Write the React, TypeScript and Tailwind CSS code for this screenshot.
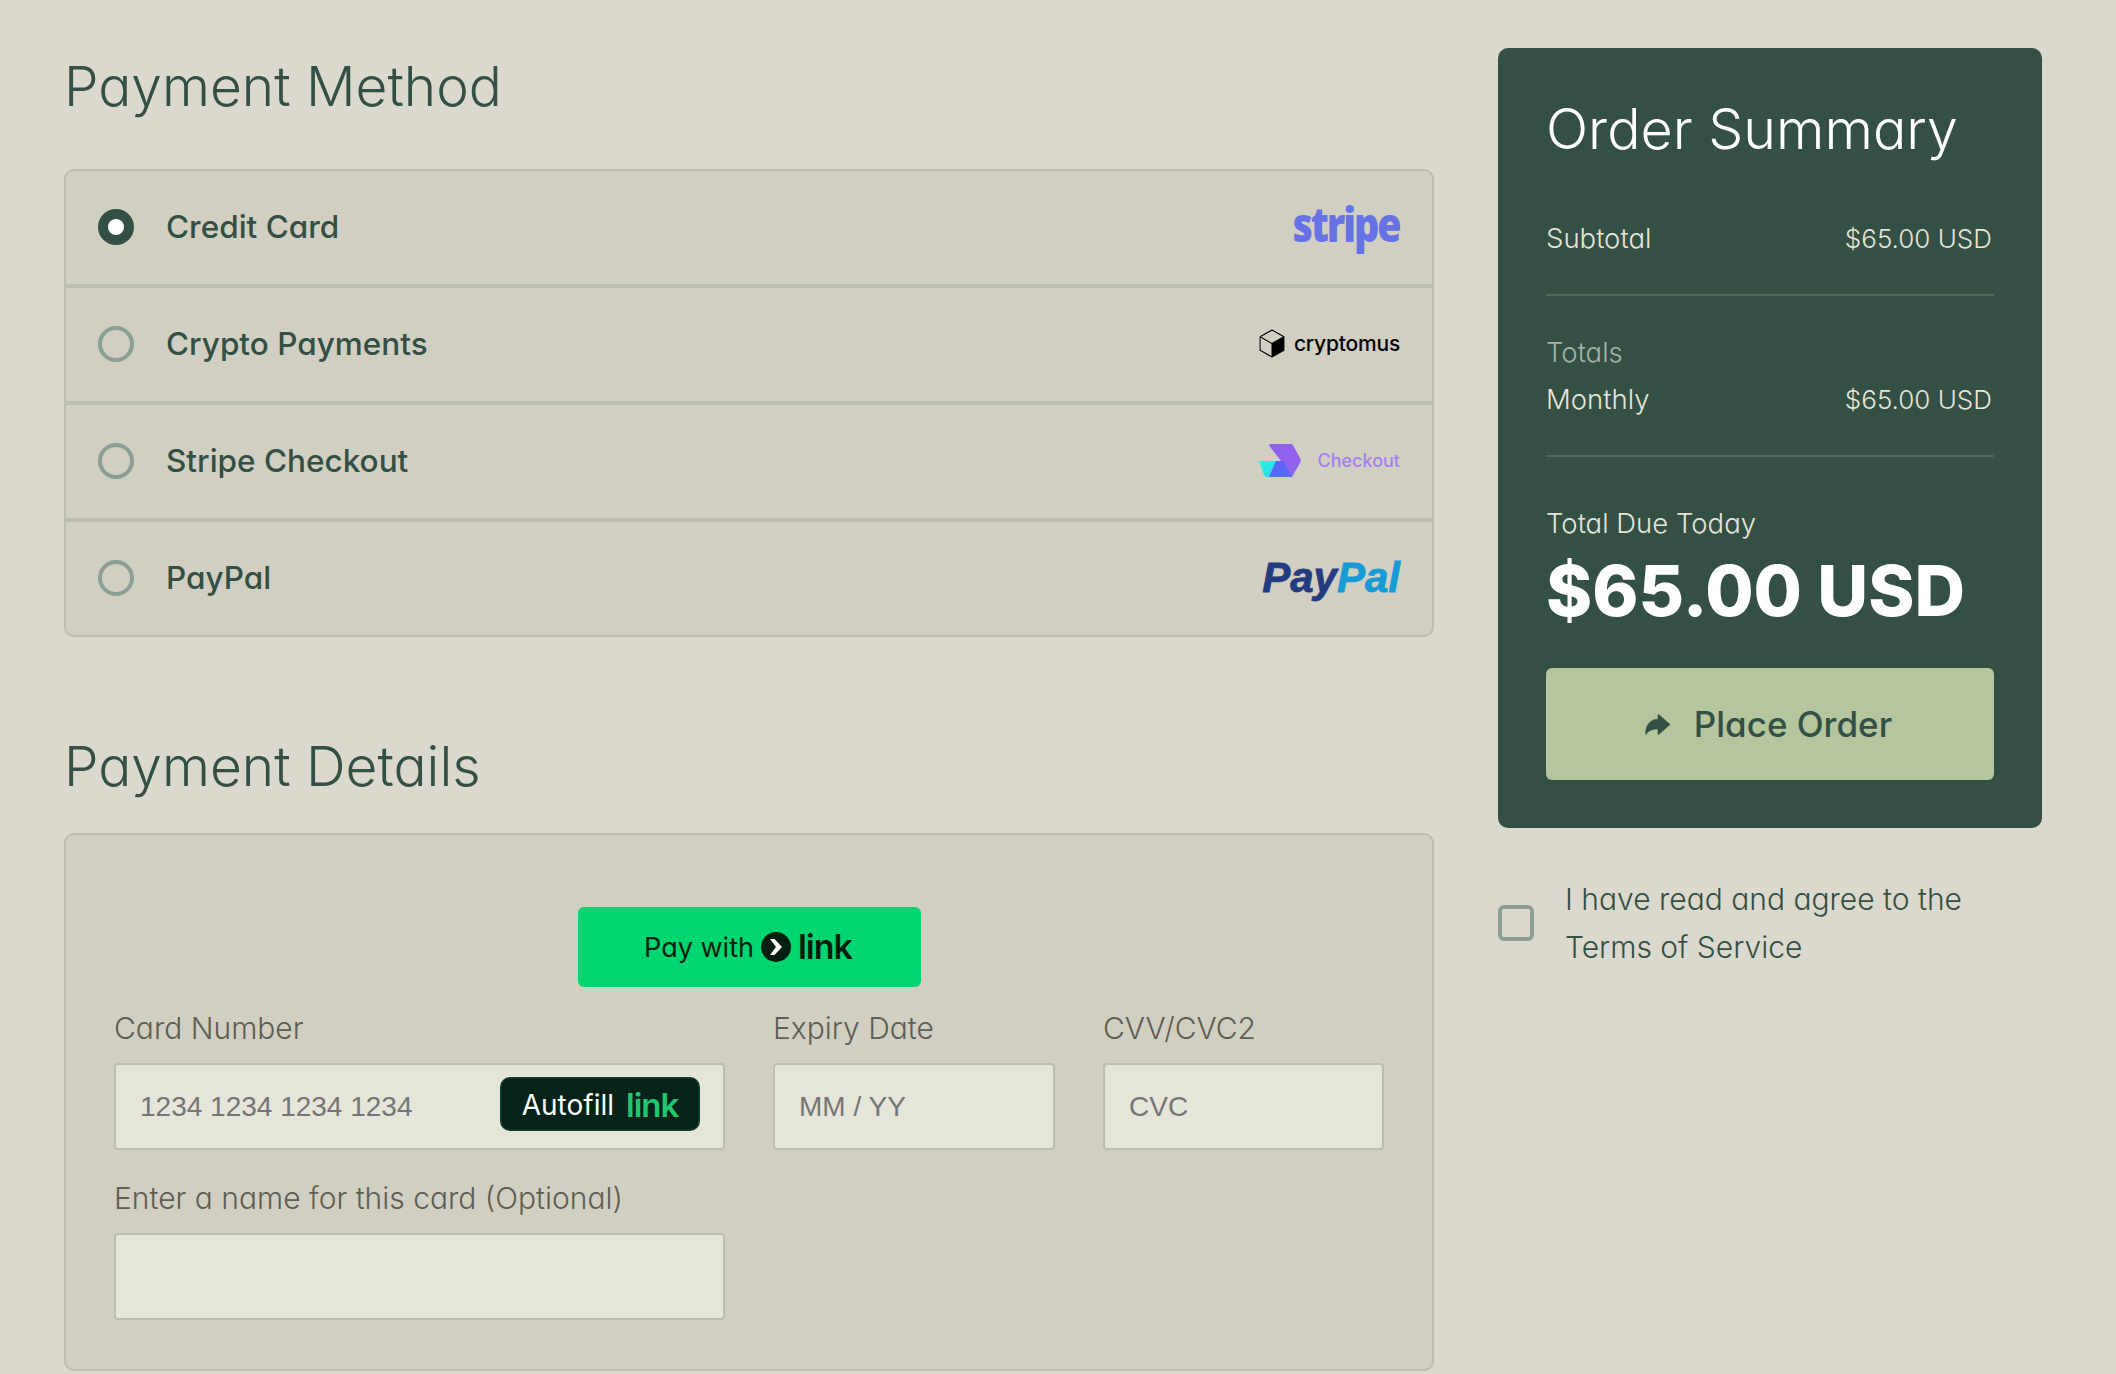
const font = "font-['Inter','Open_Sans',sans-serif] [font-feature-settings:'cv11']";

function StripeLogo() {
  return (
    <span className="origin-right scale-x-[0.82] pb-[6px] font-['Open_Sans',sans-serif] text-[48px] font-extrabold leading-none tracking-[-2.5px] text-[#6772e5]">
      stripe
    </span>
  );
}

function CryptomusLogo() {
  return (
    <div className="flex items-center gap-[9px]">
      <svg width="26" height="29" viewBox="0 0 25 28">
        <path d="M12.5 14 L24 7.5 L24 20.5 L12.5 27 Z" fill="#000" />
        <path
          d="M12.5 1 L24 7.5 L24 20.5 L12.5 27 L1 20.5 L1 7.5 Z M1 7.5 L12.5 14 L24 7.5 M12.5 14 L12.5 27"
          fill="none"
          stroke="#000"
          strokeWidth="1"
          strokeLinejoin="round"
        />
      </svg>
      <span className="text-[21px] font-medium leading-none tracking-[-0.2px] text-black">cryptomus</span>
    </div>
  );
}

function CheckoutLogo() {
  return (
    <div className="flex items-center gap-[17px]">
      <svg width="42" height="33" viewBox="0 0 42 33">
        <defs>
          <linearGradient id="co-a" x1="0" y1="0" x2="0" y2="1">
            <stop offset="0" stopColor="#5f62f5" />
            <stop offset="1" stopColor="#4f6ef7" />
          </linearGradient>
          <linearGradient id="co-b" x1="0" y1="0" x2="1" y2="1">
            <stop offset="0" stopColor="#2ff0e6" />
            <stop offset="1" stopColor="#25d8ea" />
          </linearGradient>
        </defs>
        <path d="M10 1.5 Q10 0 11.5 0 L32 0 Q33.5 0 34 1.2 L41.5 15 Q42 16.5 41.5 18 L33 33 L30 33 L22 17 L10 1.5 Z" fill="#8f63f0" />
        <path d="M0 17 L18 17 L12 33 L8 33 Q6 33 5 31 Z" fill="url(#co-b)" />
        <path d="M17 17 L24 17 L33 33 L10 33 Z" fill="url(#co-a)" />
      </svg>
      <span className="text-[18px] font-medium leading-none text-[#a57ff0]">Checkout</span>
    </div>
  );
}

function PayPalLogo() {
  return (
    <span className="font-['Liberation_Sans',sans-serif] text-[42px] font-bold italic leading-none [-webkit-text-stroke:0.8px]">
      <span className="text-[#253b80]">Pay</span>
      <span className="text-[#179bd7]">Pal</span>
    </span>
  );
}

const methods = [
  { name: "Credit Card", logo: <StripeLogo />, checked: true, row: "h-[117px] border-b-4 border-[#bcbeb2]" },
  { name: "Crypto Payments", logo: <CryptomusLogo />, checked: false, row: "h-[117px] border-b-4 border-[#bcbeb2]" },
  { name: "Stripe Checkout", logo: <CheckoutLogo />, checked: false, row: "h-[117px] border-b-4 border-[#bcbeb2]" },
  { name: "PayPal", logo: <PayPalLogo />, checked: false, row: "h-[113px]" },
];

function Radio({ checked }: { checked: boolean }) {
  if (checked) {
    return (
      <span className="flex h-9 w-9 items-center justify-center rounded-full bg-[#344f43]">
        <span className="h-4 w-4 rounded-full bg-white" />
      </span>
    );
  }
  return <span className="h-9 w-9 rounded-full border-4 border-[#8ba093]" />;
}

function Field({ label, children }: { label: string; children: React.ReactNode }) {
  return (
    <div>
      <div className="mb-[17px] h-[36px] text-[30px] leading-[36px] font-light text-[#5e5e54]">{label}</div>
      {children}
    </div>
  );
}

const inputClass =
  "h-[87px] w-full rounded-[4px] border-2 border-[#bcbeb2] bg-[#e5e5da] px-[24px] font-['Liberation_Sans',sans-serif] text-[28px] outline-none placeholder:text-[#757575]";

export default function App() {
  return (
    <div className={`${font} flex h-[1374px] overflow-hidden bg-[#dbd9cd] pl-[64px]`}>
      <div className="w-[1370px] shrink-0">
        <h1 className="mt-[46px] mb-[42px] h-[81px] text-[55px] font-light leading-[81px] text-[#344f43]">
          Payment Method
        </h1>
        <div className="overflow-hidden rounded-[10px] border-2 border-[#bcbeb2] bg-[#d1cfc2]">
          {methods.map((m) => (
            <div key={m.name} className={`flex items-center pr-[32px] pb-[2px] pl-[32px] ${m.row}`}>
              <Radio checked={m.checked} />
              <span className="ml-[32px] flex-1 text-[31.5px] font-medium text-[#344f43]">{m.name}</span>
              {m.logo}
            </div>
          ))}
        </div>

        <h2 className="mt-[89px] mb-[26px] h-[81px] text-[55px] font-light leading-[81px] text-[#344f43]">
          Payment Details
        </h2>
        <div className="h-[538px] rounded-[10px] border-2 border-[#bcbeb2] bg-[#d1cfc2] px-[48px] pt-[72px]">
          <div className="flex justify-center">
            <button className="flex h-[80px] w-[343px] items-center justify-center gap-[7px] rounded-[6px] bg-[#00d66f] pr-[2px] text-[#011e0f]">
              <span className="text-[27px] leading-none">Pay with</span>
              <span className="flex h-[30px] w-[30px] items-center justify-center rounded-full bg-[#011e0f]">
                <svg width="16" height="18" viewBox="0 0 16 18">
                  <path d="M2 1 L6.5 1 L14 9 L6.5 17 L2 17 L8 9 Z" fill="#fff" />
                </svg>
              </span>
              <span className="text-[34px] font-semibold leading-none tracking-[-1px]">link</span>
            </button>
          </div>
          <div className="mt-[23px] grid grid-cols-[611px_282px_281px] gap-x-[48px]">
            <Field label="Card Number">
              <div className="relative">
                <input className={inputClass} placeholder="1234 1234 1234 1234" />
                <div className="absolute top-[14px] left-[386px] flex h-[54px] w-[200px] items-center justify-center gap-[12px] rounded-[10px] border-2 border-[#0b3a28] bg-[#03231a] pt-[2px]">
                  <span className="text-[28px] leading-none text-white">Autofill</span>
                  <span className="text-[33px] font-semibold leading-none tracking-[-1px] text-[#1fc86f]">link</span>
                </div>
              </div>
            </Field>
            <Field label="Expiry Date">
              <input className={inputClass} placeholder="MM / YY" />
            </Field>
            <Field label="CVV/CVC2">
              <input className={inputClass} placeholder="CVC" />
            </Field>
          </div>
          <div className="mt-[30px] w-[611px]">
            <Field label="Enter a name for this card (Optional)">
              <input className={inputClass} />
            </Field>
          </div>
        </div>
      </div>

      <div className="ml-[64px] w-[544px] shrink-0 pt-[48px]">
        <div className="h-[780px] rounded-[10px] bg-[#344f43] px-[48px] pt-[40px] text-white">
          <h2 className="h-[81px] text-[55.5px] font-light leading-[81px]">Order Summary</h2>
          <div className="mt-[49px] flex items-baseline justify-between pr-[2px] text-[27.5px] font-light leading-[40px] text-[#e5e5da]">
            <span>Subtotal</span>
            <span className="text-[26px]">$65.00 USD</span>
          </div>
          <div className="mt-[35px] border-t-2 border-[#4d675b]" />
          <div className="mt-[36px] text-[27.5px] font-light leading-[40px] text-[#a3b3a8]">Totals</div>
          <div className="mt-[7px] flex items-baseline justify-between pr-[2px] text-[27.5px] font-light leading-[40px] text-[#e5e5da]">
            <span>Monthly</span>
            <span className="text-[26px]">$65.00 USD</span>
          </div>
          <div className="mt-[35px] border-t-2 border-[#4d675b]" />
          <div className="mt-[46px] text-[27.5px] font-light leading-[40px] text-[#e5e5da]">Total Due Today</div>
          <div className="mt-[6px] text-[70px] font-extrabold leading-[84px]">$65.00 USD</div>
          <button className="mt-[35px] flex h-[112px] w-[448px] items-center justify-center gap-[23px] rounded-[6px] bg-[#b5c59d] pr-[3px] text-[#344f43]">
            <svg width="26" height="21" viewBox="0 0 24 20" fill="currentColor">
              <path
                d="M23.5 10 L12.8 0.6 Q12 0 12 1 L12 5 C5 5 0.3 10 0.2 19 Q0.2 19.8 0.8 19 C3 15.6 7 14.2 12 14.2 L12 19 Q12 20 12.8 19.4 Z"
                stroke="currentColor"
                strokeWidth="0.6"
                strokeLinejoin="round"
              />
            </svg>
            <span className="text-[35px] font-medium leading-none">Place Order</span>
          </button>
        </div>
        <div className="mt-[47px] flex items-center gap-[31px]">
          <span className="h-9 w-9 shrink-0 rounded-[6px] border-4 border-[#8ba093]" />
          <p className="text-[30px] font-light leading-[48px] text-[#344f43]">
            I have read and agree to the
            <br />
            Terms of Service
          </p>
        </div>
      </div>
    </div>
  );
}
